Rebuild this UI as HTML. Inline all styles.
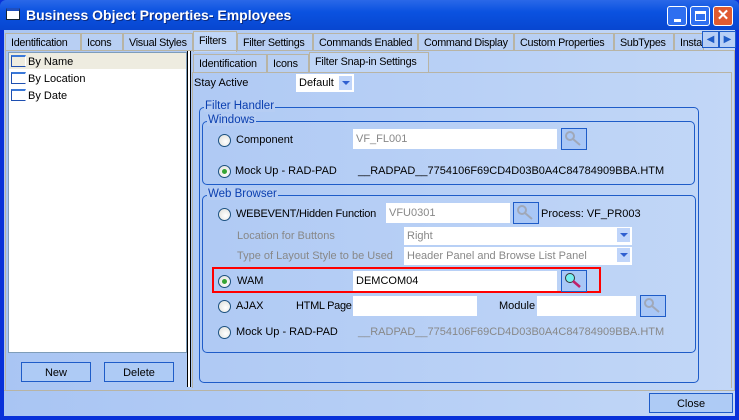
<!DOCTYPE html>
<html><head><style>
*{box-sizing:border-box;margin:0;padding:0}
body{width:739px;height:420px;overflow:hidden;font-family:"Liberation Sans",Tahoma,sans-serif;font-size:11px;color:#000;position:relative;background:#0831d9}
.a{position:absolute;white-space:nowrap}
#win{left:4px;top:30px;width:731px;height:386px;background:linear-gradient(90deg,#a9c5f3,#c2d7f7)}
.tab{position:absolute;top:33px;height:18px;border:1px solid #b8b4a4;border-bottom:none;background:#b8cff3;padding:3px 0 0 5px;white-space:nowrap;letter-spacing:-0.3px;font-size:10.8px;overflow:hidden}
.itab{position:absolute;top:54px;height:18px;border:1px solid #b8b4a4;border-bottom:none;background:#b8cff3;padding:3px 0 0 5px;white-space:nowrap;letter-spacing:-0.2px;font-size:10.8px}
.grp{position:absolute;border:1px solid #1e5cc8;border-radius:5px}
.lg{position:absolute;top:-8px;left:4px;background:#b6cdf3;padding:0 1px;color:#0b3fb0;font-size:11.5px;white-space:nowrap}
.rad{position:absolute;width:13px;height:13px;border-radius:50%;border:1px solid #1c5180;background:radial-gradient(circle at 60% 60%,#fff,#dcdcd6)}
.rad.on::after{content:"";position:absolute;left:3px;top:3px;width:5px;height:5px;border-radius:50%;background:#35a435}
.inp{position:absolute;background:#fff;height:20px;padding:4px 3px 0;color:#888;white-space:nowrap}
.btn{position:absolute;border:1px solid #1e5cc8;background:#a9c7f6;width:26px;height:22px}
.gray{color:#888}
.dd{position:absolute;right:2px;top:2px;width:13px;height:14px;background:#c0d5fa}
.dd::after{content:"";position:absolute;left:3px;top:5px;border-left:4px solid transparent;border-right:4px solid transparent;border-top:4px solid #3060d0}
.pb{position:absolute;border:1px solid #1e5cc8;background:#aecbf5;text-align:center;padding-top:4px}
</style></head><body>
<div class="a" style="left:0;top:0;width:739px;height:30px;background:linear-gradient(#2a68e8,#0a52e0 40%,#0846d0);border-radius:6px 6px 0 0"></div>
<div class="a" style="left:6px;top:8px;width:14px;height:12px;background:#fff;border:1px solid #123;border-top:3px solid #1f4fbf"></div>
<div class="a" style="left:26px;top:7px;color:#fff;font-weight:bold;font-size:14px;text-shadow:1px 1px #0a2a80">Business Object Properties- Employees</div>
<div class="a" style="left:667px;top:6px;width:20px;height:20px;border:1px solid #fff;border-radius:3px;background:#2e6ff0"><div class="a" style="left:6px;top:12px;width:7px;height:3px;background:#fff"></div></div>
<div class="a" style="left:690px;top:6px;width:20px;height:20px;border:1px solid #fff;border-radius:3px;background:#2e6ff0"><div class="a" style="left:4px;top:4px;width:11px;height:10px;border:1px solid #fff;border-top-width:3px"></div></div>
<div class="a" style="left:713px;top:6px;width:20px;height:20px;border:1px solid #fff;border-radius:3px;background:#e05a30;color:#fff;font-weight:bold;font-size:15px;text-align:center;line-height:18px">✕</div>
<div id="win" class="a"></div>
<div class="tab" style="left:5px;width:76px">Identification</div>
<div class="tab" style="left:81px;width:42px">Icons</div>
<div class="tab" style="left:123px;width:70px">Visual Styles</div>
<div class="tab" style="left:193px;top:31px;height:21px;width:44px;background:#c0d6f7">Filters</div>
<div class="tab" style="left:237px;width:76px">Filter Settings</div>
<div class="tab" style="left:313px;width:105px">Commands Enabled</div>
<div class="tab" style="left:418px;width:96px">Command Display</div>
<div class="tab" style="left:514px;width:100px">Custom Properties</div>
<div class="tab" style="left:614px;width:60px">SubTypes</div>
<div class="tab" style="left:674px;width:30px">Insta</div>
<div class="a" style="left:702px;top:31px;width:17px;height:17px;border:1px solid #1e5cc8;background:#b7cff6;color:#1e5cc8;font-size:10px;text-align:center;line-height:15px">◀</div>
<div class="a" style="left:719px;top:31px;width:17px;height:17px;border:1px solid #1e5cc8;background:#b7cff6;color:#1e5cc8;font-size:10px;text-align:center;line-height:15px">▶</div>
<div class="a" style="left:5px;top:50px;width:730px;height:341px;border:1px solid #b8b4a4"></div>
<div class="a" style="left:8px;top:52px;width:179px;height:301px;background:#fff;border:1px solid #7f9db9"></div>
<div class="a" style="left:9px;top:53px;width:177px;height:16px;background:#eeece0"></div>
<div class="a" style="left:11px;top:55px;width:15px;height:12px;border:1px solid #1e4fb0;border-top:2px solid #3a78d8;border-right-color:#fff"></div>
<div class="a" style="left:11px;top:72px;width:15px;height:12px;border:1px solid #1e4fb0;border-top:2px solid #3a78d8;border-right-color:#fff"></div>
<div class="a" style="left:11px;top:89px;width:15px;height:12px;border:1px solid #1e4fb0;border-top:2px solid #3a78d8;border-right-color:#fff"></div>
<div class="a" style="left:28px;top:56px">By Name</div>
<div class="a" style="left:28px;top:73px">By Location</div>
<div class="a" style="left:28px;top:90px">By Date</div>
<div class="pb" style="left:21px;top:362px;width:70px;height:20px">New</div>
<div class="pb" style="left:104px;top:362px;width:70px;height:20px">Delete</div>
<div class="a" style="left:187px;top:51px;width:4px;height:336px;border-left:1px solid #000;border-right:1px solid #000;background:#fff"></div>
<div class="itab" style="left:193px;width:74px">Identification</div>
<div class="itab" style="left:267px;width:42px">Icons</div>
<div class="itab" style="left:309px;top:52px;height:21px;width:120px;background:#c0d6f7">Filter Snap-in Settings</div>
<div class="a" style="left:192px;top:72px;width:540px;height:316px;border:1px solid #b8b4a4;border-bottom:none"></div>
<div class="a" style="left:194px;top:77px">Stay Active</div>
<div class="a" style="left:296px;top:74px;width:58px;height:18px;background:#fff;padding:3px 3px">Default<div class="dd" style="top:2px"></div></div>
<div class="grp" style="left:199px;top:107px;width:500px;height:276px"><div class="lg">Filter Handler</div></div>
<div class="grp" style="left:202px;top:121px;width:493px;height:64px"><div class="lg">Windows</div></div>
<div class="rad" style="left:218px;top:134px"></div><div class="a" style="left:236px;top:134px">Component</div>
<div class="inp" style="left:353px;top:129px;width:204px">VF_FL001</div>
<div class="btn" style="left:561px;top:128px"></div>
<div class="rad on" style="left:218px;top:165px"></div><div class="a" style="left:235px;top:165px">Mock Up - RAD-PAD</div>
<div class="a" style="left:358px;top:165px">__RADPAD__7754106F69CD4D03B0A4C84784909BBA.HTM</div>
<div class="grp" style="left:202px;top:195px;width:494px;height:158px"><div class="lg">Web Browser</div></div>
<div class="rad" style="left:218px;top:208px"></div><div class="a" style="left:236px;top:208px;letter-spacing:-0.2px">WEBEVENT/Hidden Function</div>
<div class="inp" style="left:386px;top:203px;width:124px">VFU0301</div>
<div class="btn" style="left:513px;top:202px"></div>
<div class="a" style="left:541px;top:208px">Process: VF_PR003</div>
<div class="a gray" style="left:237px;top:230px">Location for Buttons</div>
<div class="inp" style="left:404px;top:227px;width:228px;height:18px;padding-top:3px">Right<div class="dd" style="top:1px"></div></div>
<div class="a gray" style="left:237px;top:250px">Type of Layout Style to be Used</div>
<div class="inp" style="left:404px;top:247px;width:228px;height:18px;padding-top:3px">Header Panel and Browse List Panel<div class="dd" style="top:1px"></div></div>
<div class="a" style="left:212px;top:267px;width:389px;height:26px;border:2px solid #f00"></div>
<div class="rad on" style="left:218px;top:275px"></div><div class="a" style="left:237px;top:275px">WAM</div>
<div class="inp" style="left:353px;top:271px;width:204px;color:#000">DEMCOM04</div>
<div class="btn" style="left:561px;top:270px"></div>
<div class="rad" style="left:218px;top:300px"></div><div class="a" style="left:236px;top:300px">AJAX</div>
<div class="a" style="left:296px;top:300px;letter-spacing:-0.3px">HTML Page</div>
<div class="inp" style="left:353px;top:296px;width:124px"></div>
<div class="a" style="left:499px;top:300px">Module</div>
<div class="inp" style="left:537px;top:296px;width:99px"></div>
<div class="btn" style="left:640px;top:295px"></div>
<div class="rad" style="left:218px;top:326px"></div><div class="a" style="left:236px;top:326px">Mock Up - RAD-PAD</div>
<div class="a gray" style="left:358px;top:326px">__RADPAD__7754106F69CD4D03B0A4C84784909BBA.HTM</div>
<svg class="a" style="left:0;top:0" width="739" height="420">
<g stroke="#a0a8b8" stroke-width="2" fill="none"><circle cx="570" cy="136" r="4"/><line x1="573" y1="139" x2="580" y2="145"/><circle cx="522" cy="210" r="4"/><line x1="525" y1="213" x2="532" y2="219"/><circle cx="649" cy="303" r="4"/><line x1="652" y1="306" x2="659" y2="312"/></g>
<circle cx="570" cy="278" r="4.5" fill="#7ee" stroke="#333"/><line x1="573" y1="281" x2="580" y2="287" stroke="#c0206a" stroke-width="2.5"/>
</svg>
<div class="a" style="left:4px;top:390px;width:731px;height:1px;background:#b8b4a4"></div>
<div class="pb" style="left:649px;top:393px;width:84px;height:20px">Close</div>
</body></html>
